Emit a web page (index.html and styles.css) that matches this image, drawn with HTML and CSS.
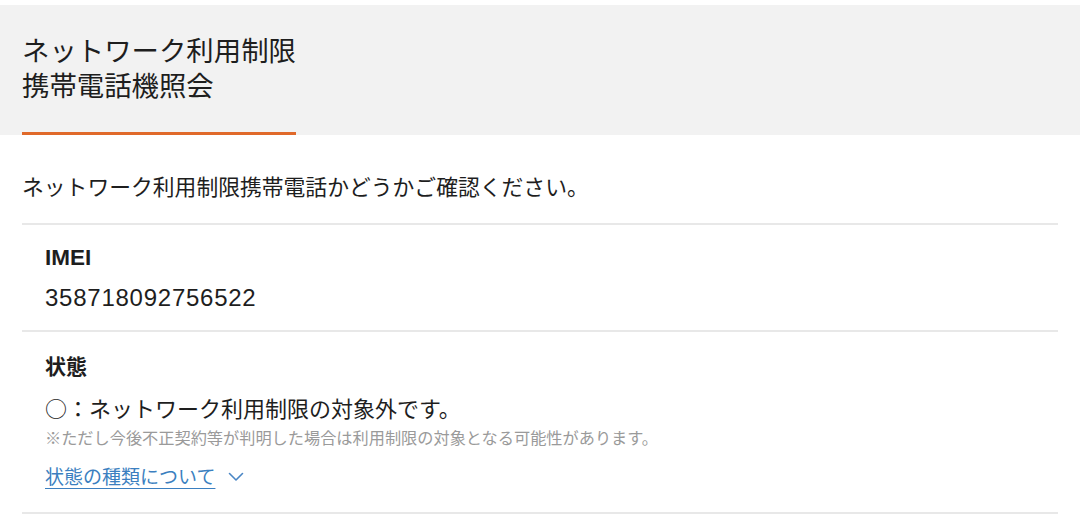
FILE: index.html
```html
<!DOCTYPE html>
<html lang="ja">
<head>
<meta charset="utf-8">
<title>ネットワーク利用制限携帯電話機照会</title>
<link rel="stylesheet" href="styles.css">
</head>
<body>
<header class="head">
  <h1 class="title"><span class="title-text">ネットワーク利用制限<br>携帯電話機照会</span></h1>
</header>
<main class="main">
  <p class="intro">ネットワーク利用制限携帯電話かどうかご確認ください。</p>
  <section class="sec sec-imei">
    <h2 class="label latin">IMEI</h2>
    <p class="value latin">358718092756522</p>
  </section>
  <section class="sec sec-status">
    <h2 class="label">状態</h2>
    <p class="status">○：ネットワーク利用制限の対象外です。</p>
    <p class="note">※ただし今後不正契約等が判明した場合は利用制限の対象となる可能性があります。</p>
    <p class="more"><a class="more-link" href="#">状態の種類について</a><svg class="chev" width="16" height="10" viewBox="0 0 16 10"><path d="M1.5 1.5 L8 8 L14.5 1.5" fill="none" stroke="#4a86c5" stroke-width="1.6" stroke-linecap="round" stroke-linejoin="round"/></svg></p>
  </section>
</main>
</body>
</html>
```
FILE: styles.css
```css
html, body {
  margin: 0;
  padding: 0;
  background: #ffffff;
}
body {
  padding-top: 5px;
  font-family: "Noto Sans CJK JP", "Noto Sans", sans-serif;
  color: #1e1e1e;
}
.head {
  background: #f2f2f2;
  padding: 27px 22px 0;
  height: 103px;
  display: flex;
  align-items: flex-start;
}
.title {
  margin: 0;
  font-size: 27.4px;
  font-weight: 400;
  line-height: 35px;
  height: 103px;
  box-sizing: border-box;
  border-bottom: 3px solid #e0692a;
  display: flex;
  align-items: flex-start;
}
.title-text {
  display: block;
  letter-spacing: 0;
}
.main {
  padding: 0 22px;
}
.intro {
  margin: 0;
  padding: 36px 0 22px;
  font-size: 21.8px;
  line-height: 30px;
  border-bottom: 2px solid #e8e8e8;
}
.sec {
  padding: 0 23px;
  border-bottom: 2px solid #e8e8e8;
}
.sec-imei {
  padding-top: 18px;
  padding-bottom: 17px;
}
.sec-status {
  padding-top: 18px;
  padding-bottom: 22px;
}
.label {
  margin: 0;
  font-size: 21px;
  font-weight: 700;
  line-height: 30px;
}
.latin {
  font-family: "Liberation Sans", "Noto Sans CJK JP", sans-serif;
}
.label.latin {
  font-size: 22.5px;
}
.value {
  margin: 10px 0 0;
  font-size: 24px;
  letter-spacing: 0.75px;
  line-height: 30px;
  color: #1e1e1e;
}
.status {
  margin: 12px 0 0;
  font-size: 22px;
  line-height: 30px;
}
.note {
  margin: 4px 0 0;
  font-size: 16.2px;
  line-height: 22px;
  color: #9a9a9a;
}
.more {
  margin: 14px 0 0;
  line-height: 28px;
  display: flex;
  align-items: center;
  gap: 13px;
}
.more-link {
  font-size: 19px;
  color: #3b7fc0;
  text-decoration: underline;
  text-underline-offset: 4px;
  text-decoration-thickness: 1px;
}
.chev {
  display: block;
  margin-top: 2px;
}
```
